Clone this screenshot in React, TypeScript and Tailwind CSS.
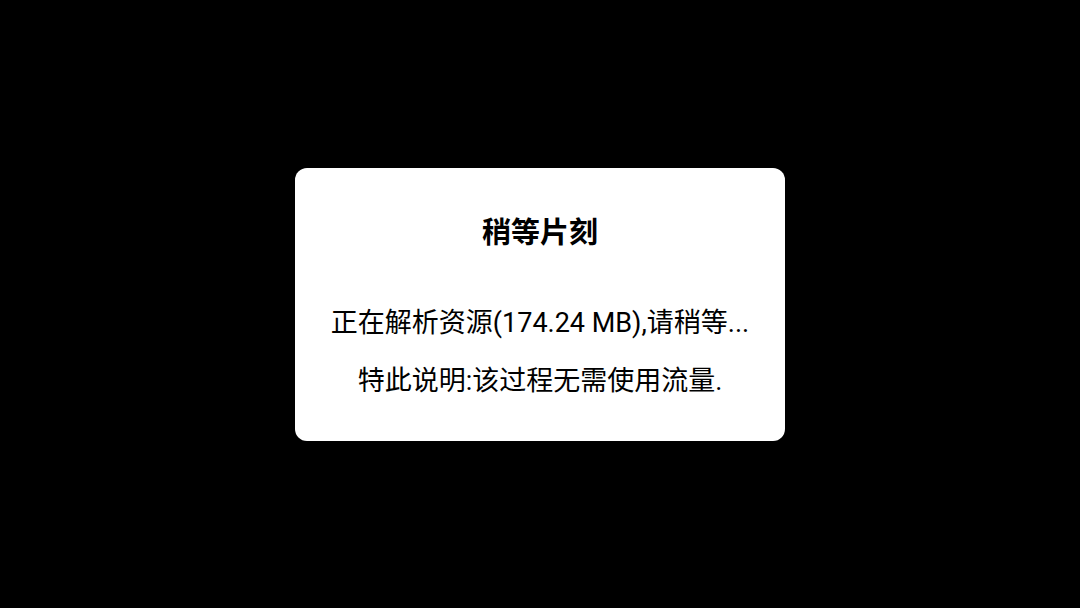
export default function App() {
  return (
    <div
      className="w-[1080px] h-[608px] bg-black flex items-center justify-center"
      style={{ fontFamily: 'Roboto, "Noto Sans CJK SC", sans-serif' }}
    >
      <div className="w-[490px] h-[273px] bg-white rounded-[12px] flex flex-col items-center text-black">
        <div className="mt-[47px] text-[29px] leading-[36px] font-bold">稍等片刻</div>
        <div className="mt-[55px] text-[27px] leading-[34px] whitespace-nowrap">正在解析资源(174.24 MB),请稍等...</div>
        <div className="mt-[24px] text-[27px] leading-[34px] whitespace-nowrap">特此说明:该过程无需使用流量.</div>
      </div>
    </div>
  );
}
